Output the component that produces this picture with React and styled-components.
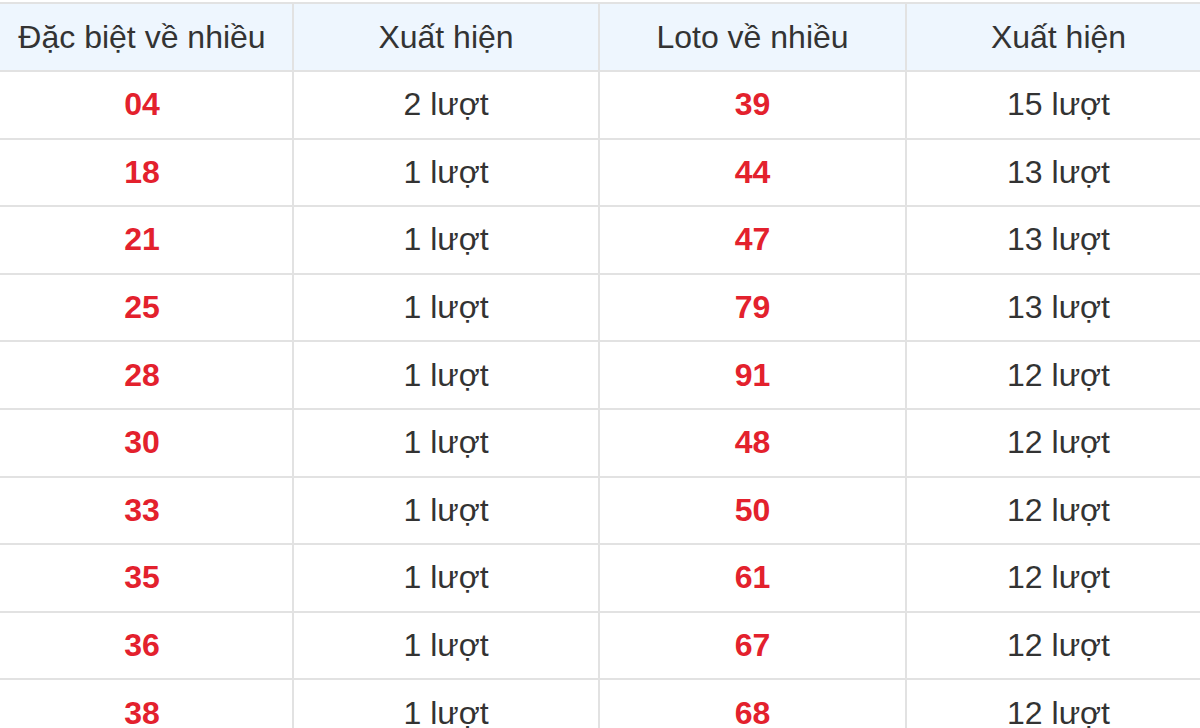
import React from "react";
import styled, { createGlobalStyle } from "styled-components";

const GlobalStyle = createGlobalStyle`
  html, body {
    margin: 0;
    padding: 0;
    background: #fff;
    overflow: hidden;
  }
  body {
    font-family: "Liberation Sans", Arial, sans-serif;
  }
`;

const Wrapper = styled.div`
  width: 1200px;
  height: 728px;
  overflow: hidden;
  padding-top: 2px;
  box-sizing: border-box;
`;

const StyledTable = styled.table`
  border-collapse: collapse;
  table-layout: fixed;
  width: 1220px;
  margin-left: -10px;
`;

const Col = styled.col`
  width: ${(props) => props.w}px;
`;

const HeadCell = styled.th`
  height: 66px;
  padding: 0;
  border: 2px solid #e2e2e2;
  background: #eef6fe;
  font-weight: normal;
  font-size: 32px;
  color: #333;
  text-align: center;
  vertical-align: middle;
`;

const Cell = styled.td`
  height: 65.6px;
  padding: 0;
  border: 2px solid #e2e2e2;
  font-size: 32px;
  text-align: center;
  vertical-align: middle;
  color: ${(props) => (props.red ? "#e3212d" : "#333")};
  font-weight: ${(props) => (props.red ? "bold" : "normal")};
`;

const rows = [
  ["04", 2, "39", 15],
  ["18", 1, "44", 13],
  ["21", 1, "47", 13],
  ["25", 1, "79", 13],
  ["28", 1, "91", 12],
  ["30", 1, "48", 12],
  ["33", 1, "50", 12],
  ["35", 1, "61", 12],
  ["36", 1, "67", 12],
  ["38", 1, "68", 12],
];

const App = () => {
  return (
    <Wrapper>
      <GlobalStyle />
      <StyledTable>
        <colgroup>
          <Col w={302} />
          <Col w={306} />
          <Col w={307} />
          <Col w={305} />
        </colgroup>
        <thead>
          <tr>
            <HeadCell>Đặc biệt về nhiều</HeadCell>
            <HeadCell>Xuất hiện</HeadCell>
            <HeadCell>Loto về nhiều</HeadCell>
            <HeadCell>Xuất hiện</HeadCell>
          </tr>
        </thead>
        <tbody>
          {rows.map((r) => (
            <tr key={r[0]}>
              <Cell red>{r[0]}</Cell>
              <Cell>{r[1]} lượt</Cell>
              <Cell red>{r[2]}</Cell>
              <Cell>{r[3]} lượt</Cell>
            </tr>
          ))}
        </tbody>
      </StyledTable>
    </Wrapper>
  );
};

export default App;
